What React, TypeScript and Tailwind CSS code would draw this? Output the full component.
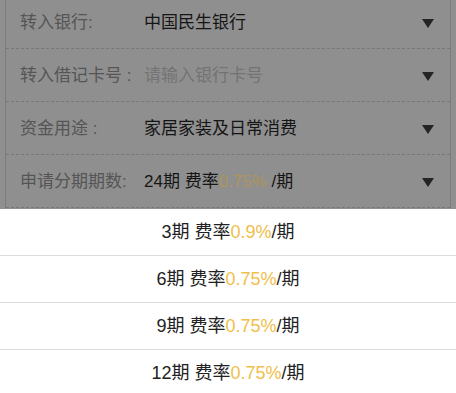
import { Fragment } from "react";

type Row = { label: string; value: string; placeholder?: boolean; rate?: string };

const ROWS: Row[] = [
  { label: "转入银行:", value: "中国民生银行" },
  { label: "转入借记卡号 :", value: "请输入银行卡号", placeholder: true },
  { label: "资金用途 :", value: "家居家装及日常消费" },
  { label: "申请分期期数:", value: "24期 费率", rate: "0.75%" },
];

const OPTIONS = [
  { n: "3期", rate: "0.9%" },
  { n: "6期", rate: "0.75%" },
  { n: "9期", rate: "0.75%" },
  { n: "12期", rate: "0.75%" },
];

function Caret() {
  return (
    <svg width="12" height="9" viewBox="0 0 12 9" className="shrink-0">
      <polygon points="0,0 12,0 6,9" fill="#242424" />
    </svg>
  );
}

export default function App() {
  return (
    <div
      className="w-[456px] h-[393px] flex flex-col overflow-hidden bg-white"
      style={{ fontFamily: "'Liberation Sans', 'Noto Sans CJK SC', sans-serif" }}
    >
      {/* dimmed form behind the sheet */}
      <div className="h-[209px] shrink-0 bg-[#8f8f8f] overflow-hidden">
        <div className="mx-[5px] -mt-[4px] border-x border-[#7c7c7c]">
          {ROWS.map((row) => (
            <div
              key={row.label}
              className="h-[53px] flex items-center pl-[14px] pr-[16px] pt-[2px] border-b border-dashed border-[#777777] text-[17px]"
            >
              <span className="w-[124px] shrink-0 text-[#555555] whitespace-nowrap">{row.label}</span>
              <span className={`flex-1 whitespace-nowrap ${row.placeholder ? "text-[#737373]" : "text-[#151515]"}`}>
                {row.value}
                {row.rate && (
                  <>
                    <span className="text-[#ad955a]">{row.rate}</span> /期
                  </>
                )}
              </span>
              <Caret />
            </div>
          ))}
        </div>
      </div>

      {/* action sheet */}
      <div className="flex-1 flex flex-col text-[18px] text-[#222222]">
        {OPTIONS.map((o, i) => (
          <Fragment key={o.n}>
            {i > 0 && <div className="h-px bg-[#dcdcdc] shrink-0" />}
            <div className="h-[46px] flex items-center justify-center whitespace-nowrap">
              {o.n} 费率<span className="text-[#f0be4a]">{o.rate}</span>/期
            </div>
          </Fragment>
        ))}
      </div>
    </div>
  );
}
